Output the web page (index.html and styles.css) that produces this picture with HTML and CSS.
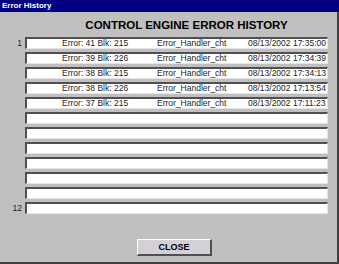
FILE: index.html
```html
<!DOCTYPE html>
<html>
<head>
<meta charset="utf-8">
<link rel="stylesheet" href="styles.css">
</head>
<body>
<div class="window">
  <div class="titlebar">Error History</div>
  <div class="heading">CONTROL ENGINE ERROR HISTORY</div>
  <div class="rows">
    <div class="row"><span class="num">1</span><div class="box"><span class="c1">Error: 41 Blk: 215</span><span class="c2">Error_Handler_cht</span><span class="c3">08/13/2002 17:35:00</span></div></div>
    <div class="row"><span class="num"></span><div class="box"><span class="c1">Error: 39 Blk: 226</span><span class="c2">Error_Handler_cht</span><span class="c3">08/13/2002 17:34:39</span></div></div>
    <div class="row"><span class="num"></span><div class="box"><span class="c1">Error: 38 Blk: 215</span><span class="c2">Error_Handler_cht</span><span class="c3">08/13/2002 17:34:13</span></div></div>
    <div class="row"><span class="num"></span><div class="box"><span class="c1">Error: 38 Blk: 226</span><span class="c2">Error_Handler_cht</span><span class="c3">08/13/2002 17:13:54</span></div></div>
    <div class="row"><span class="num"></span><div class="box"><span class="c1">Error: 37 Blk: 215</span><span class="c2">Error_Handler_cht</span><span class="c3">08/13/2002 17:11:23</span></div></div>
    <div class="row"><span class="num"></span><div class="box"></div></div>
    <div class="row"><span class="num"></span><div class="box"></div></div>
    <div class="row"><span class="num"></span><div class="box"></div></div>
    <div class="row"><span class="num"></span><div class="box"></div></div>
    <div class="row"><span class="num"></span><div class="box"></div></div>
    <div class="row"><span class="num"></span><div class="box"></div></div>
    <div class="row"><span class="num">12</span><div class="box"></div></div>
  </div>
  <div class="footer"><button class="close">CLOSE</button></div>
</div>
</body>
</html>
```
FILE: styles.css
```css
html, body {
  margin: 0;
  padding: 0;
}
.window {
  width: 339px;
  height: 264px;
  box-sizing: border-box;
  background: #c0c0c0;
  border-right: 2px solid #404040;
  border-bottom: 2px solid #404040;
  font-family: "Liberation Sans", Arial, sans-serif;
  display: flex;
  flex-direction: column;
}
.titlebar {
  height: 12px;
  line-height: 12px;
  background: #000080;
  color: #fff;
  font-weight: bold;
  font-size: 8px;
  padding-left: 2px;
  margin-right: -2px;
}
.heading {
  margin-top: 6px;
  height: 14px;
  line-height: 14px;
  font-size: 11.5px;
  font-weight: bold;
  color: #000;
  text-align: center;
  padding-left: 36px;
}
.rows {
  margin-top: 5px;
  display: flex;
  flex-direction: column;
  gap: 3px;
}
.row {
  display: grid;
  grid-template-columns: 22px 303px;
  column-gap: 3px;
  height: 12px;
}
.num {
  text-align: right;
  font-size: 8.5px;
  line-height: 12px;
  color: #222;
}
.box {
  box-sizing: border-box;
  height: 12px;
  background: #fff;
  border-top: 2px solid #505050;
  border-left: 2px solid #505050;
  border-bottom: 1px solid #e4e4e4;
  border-right: 1px solid #e4e4e4;
  display: flex;
  font-size: 8.5px;
  line-height: 9px;
  color: #222;
  white-space: nowrap;
}
.c1 {
  width: 130px;
  padding-left: 35px;
  box-sizing: border-box;
}
.c2 {
  width: 91px;
}
.c3 {
  flex: 1;
}
.footer {
  margin-top: auto;
  padding-bottom: 6px;
  padding-left: 137px;
  display: flex;
}
.close {
  width: 75px;
  height: 17px;
  padding: 0;
  background: #d4d0d8;
  border-top: 1px solid #ffffff;
  border-left: 1px solid #ffffff;
  border-right: 2px solid #505050;
  border-bottom: 2px solid #505050;
  font-family: "Liberation Sans", Arial, sans-serif;
  font-weight: bold;
  font-size: 9px;
  color: #000;
}
```
